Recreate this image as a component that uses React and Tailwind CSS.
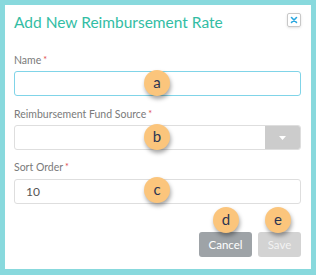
import React from 'react';

const Callout = ({ letter, className }) => (
  <div
    className={`absolute w-[26px] h-[26px] rounded-full bg-[#fbc57c] flex items-center justify-center text-[15px] leading-none text-[#2b3553] shadow-[1px_3px_4px_rgba(0,0,0,0.35)] ${className}`}
  >
    <span className="-mt-[2px]">{letter}</span>
  </div>
);

const Label = ({ children }) => (
  <div className="text-[10.5px] leading-[16px] text-[#7a7a7a]">
    {children}
    <span className="text-[#e0474c] text-[9px] align-top ml-[2px]">*</span>
  </div>
);

export default function App() {
  return (
    <div
      className="relative w-[316px] h-[275px] bg-[#88d9dd] pt-[5px] px-[5px] pb-[6px]"
      style={{ fontFamily: 'Lato, "Open Sans", sans-serif' }}
    >
      <div className="bg-white h-full pl-[9px] pr-[10px] pt-[6px] flex flex-col">
        {/* header */}
        <div className="flex items-start justify-between">
          <h1 className="text-[15.5px] leading-[22px] text-[#33bda4]">Add New Reimbursement Rate</h1>
          <button className="mt-[2px] w-[14px] h-[14px] border border-[#c8c8c8] rounded-[2px] flex items-center justify-center shadow-sm">
            <svg width="8" height="8" viewBox="0 0 8 8">
              <path d="M1.5 1.5 L6.5 6.5 M6.5 1.5 L1.5 6.5" stroke="#2aa7df" strokeWidth="1.6" strokeLinecap="round" />
            </svg>
          </button>
        </div>

        <div className="mt-[19px]">
          <Label>Name</Label>
          <input className="mt-[3px] w-full h-[25px] border border-[#80d4e8] rounded-[3px] outline-none px-[10px] text-[12px]" />
        </div>

        <div className="mt-[10px]">
          <Label>Reimbursement Fund Source</Label>
          <div className="mt-[3px] w-full h-[25px] border border-[#dedede] rounded-[3px] flex overflow-hidden">
            <div className="flex-1" />
            <div className="w-[35px] bg-[#cccccc] flex items-center justify-center">
              <svg width="7" height="4" viewBox="0 0 7 4">
                <path d="M0 0 L7 0 L3.5 4 Z" fill="#ffffff" />
              </svg>
            </div>
          </div>
        </div>

        <div className="mt-[9px]">
          <Label>Sort Order</Label>
          <div className="mt-[4px] w-full h-[25px] border border-[#dedede] rounded-[3px] flex items-center pl-[11px] text-[12px] text-[#555]">
            10
          </div>
        </div>

        <div className="mt-[28px] flex justify-end gap-[6px]">
          <button className="w-[53px] h-[25px] bg-[#9ea3a7] rounded-[3px] text-white text-[11.5px]">Cancel</button>
          <button className="w-[43px] h-[25px] bg-[#d3d3d3] rounded-[3px] text-[#f2f2f2] text-[11.5px]">Save</button>
        </div>
      </div>

      <Callout letter="a" className="left-[144px] top-[70px]" />
      <Callout letter="b" className="left-[144px] top-[124px]" />
      <Callout letter="c" className="left-[144px] top-[177px]" />
      <Callout letter="d" className="left-[213px] top-[207px]" />
      <Callout letter="e" className="left-[265px] top-[207px]" />
    </div>
  );
}
